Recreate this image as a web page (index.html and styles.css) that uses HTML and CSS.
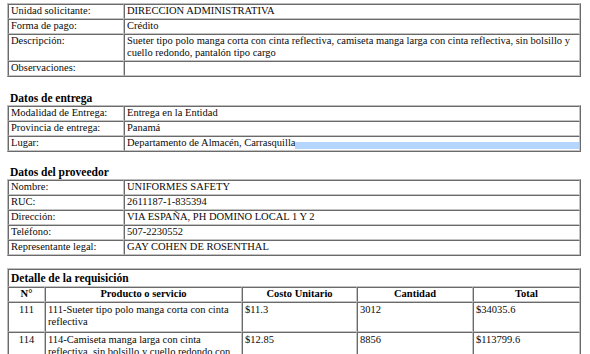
FILE: index.html
```html
<!DOCTYPE html>
<html lang="es">
<head>
<meta charset="utf-8">
<title>Requisición</title>
<link rel="stylesheet" href="styles.css">
</head>
<body>
<div class="page">
  <h2 class="section top">Datos de la solicitud</h2>
  <table class="kv first">
    <colgroup><col class="label-col"><col></colgroup>
    <tr><td>Unidad solicitante:</td><td>DIRECCION ADMINISTRATIVA</td></tr>
    <tr><td>Forma de pago:</td><td>Crédito</td></tr>
    <tr><td>Descripción:</td><td>Sueter tipo polo manga corta con cinta reflectiva, camiseta manga larga con cinta reflectiva, sin bolsillo y cuello redondo, pantalón tipo cargo</td></tr>
    <tr><td>Observaciones:</td><td></td></tr>
  </table>

  <h2 class="section">Datos de entrega</h2>
  <table class="kv">
    <colgroup><col class="label-col"><col></colgroup>
    <tr><td>Modalidad de Entrega:</td><td>Entrega en la Entidad</td></tr>
    <tr><td>Provincia de entrega:</td><td>Panamá</td></tr>
    <tr><td>Lugar:</td><td class="selected-cell"><span>Departamento de Almacén, Carrasquilla</span><span class="selection"></span></td></tr>
  </table>

  <h2 class="section">Datos del proveedor</h2>
  <table class="kv">
    <colgroup><col class="label-col"><col></colgroup>
    <tr><td>Nombre:</td><td>UNIFORMES SAFETY</td></tr>
    <tr><td>RUC:</td><td>2611187-1-835394</td></tr>
    <tr><td>Dirección:</td><td>VIA ESPAÑA, PH DOMINO LOCAL 1 Y 2</td></tr>
    <tr><td>Teléfono:</td><td>507-2230552</td></tr>
    <tr><td>Representante legal:</td><td>GAY COHEN DE ROSENTHAL</td></tr>
  </table>

  <table class="detail">
    <colgroup>
      <col class="c-num"><col class="c-prod"><col class="c-cost"><col class="c-qty"><col class="c-total">
    </colgroup>
    <tr><td class="caption" colspan="5">Detalle de la requisición</td></tr>
    <tr class="head"><td>N°</td><td>Producto o servicio</td><td>Costo Unitario</td><td>Cantidad</td><td>Total</td></tr>
    <tr class="item"><td class="num">111</td><td>111-Sueter tipo polo manga corta con cinta reflectiva</td><td>$11.3</td><td>3012</td><td>$34035.6</td></tr>
    <tr class="item"><td class="num">114</td><td>114-Camiseta manga larga con cinta reflectiva, sin bolsillo y cuello redondo con</td><td>$12.85</td><td>8856</td><td>$113799.6</td></tr>
  </table>
</div>
</body>
</html>
```

FILE: styles.css
```css
html, body {
  margin: 0;
  padding: 0;
  background: #ffffff;
}

body {
  font-family: "Liberation Serif", "Times New Roman", serif;
  font-size: 10.5px;
  color: #0a0a0a;
  overflow: hidden;
}

.page {
  width: 574px;
  margin: -10px 0 0 7px;
}

.section {
  font-size: 11.5px;
  font-weight: bold;
  line-height: 13px;
  margin: 14px 0 0 0;
  padding-left: 3px;
  color: #000000;
}

.section.top {
  margin-top: 0;
}

table {
  width: 574px;
  border-collapse: separate;
  border-spacing: 0;
  table-layout: fixed;
  border: 1px solid;
  border-color: #bdbdbd #6a6a6a #6a6a6a #bdbdbd;
}

.kv.first {
  margin-bottom: 15px;
}

td {
  border: 1px solid;
  border-color: #6a6a6a #c4c4c4 #c4c4c4 #6a6a6a;
  padding: 0 2px 1px 2px;
  line-height: 12px;
  vertical-align: top;
}

.kv .label-col {
  width: 116px;
}

.selected-cell {
  display: flex;
  align-items: flex-end;
}

.selection {
  flex: 1;
  height: 7px;
  margin-right: -2px;
  margin-left: -1px;
  background: #b4d5fc;
}

.detail {
  margin-top: 12px;
}

.c-num { width: 37px; }
.c-prod { width: 197px; }
.c-cost { width: 115px; }
.c-qty { width: 116px; }
.c-total { width: 107px; }

.detail .caption {
  font-size: 11.5px;
  font-weight: bold;
  line-height: 14px;
  padding: 1px 2px 1px 2px;
  color: #000000;
}

.detail .head td {
  font-weight: bold;
  text-align: center;
  color: #000000;
}

.detail .item td {
  padding-top: 1px;
  padding-bottom: 3px;
}

.detail .item td.num {
  text-align: center;
}
```
